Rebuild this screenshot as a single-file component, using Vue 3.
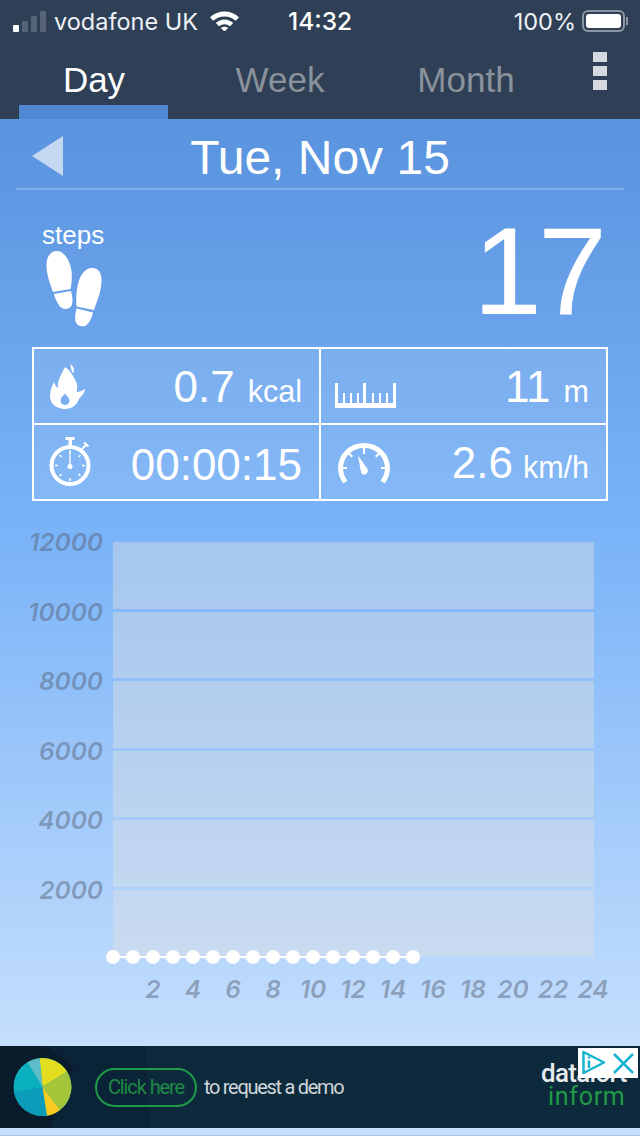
<template>
  <div class="page">
    <!-- Status bar + tabs -->
    <header class="top">
      <div class="status">
        <div class="status-left">
          <div class="signal">
            <i class="on"></i><i class="b2"></i><i class="b3"></i><i class="b4"></i>
          </div>
          <span class="carrier">vodafone UK</span>
          <svg class="wifi" width="29" height="20" viewBox="0 0 29 20">
            <path d="M0 6.300C8-1.600 21-1.600 29 6.300L25.800 9.800C19.500 4 9.500 4 3.200 9.800Z" fill="#fff" />
            <path d="M5.800 12C11 7.300 18 7.300 23.200 12L20 15.300C16.800 12.500 12.200 12.500 9 15.300Z" fill="#fff" />
            <path d="M10.800 17C13 15.200 16 15.200 18.200 17L14.500 20.500Z" fill="#fff" />
          </svg>
        </div>
        <span class="clock">14:32</span>
        <div class="status-right">
          <span class="pct">100%</span>
          <div class="battery"><div class="charge"></div></div>
          <div class="nub"></div>
        </div>
      </div>
      <nav class="tabs">
        <div v-for="t in tabs" :key="t" class="tab" :class="{ active: t === 'Day' }">{{ t }}</div>
        <div class="menu"><i></i><i></i><i></i></div>
      </nav>
    </header>

    <main class="content">
      <div class="date-row">
        <div class="back"></div>
        <h1>Tue, Nov 15</h1>
      </div>

      <section class="steps">
        <div class="steps-left">
          <div class="steps-label">steps</div>
          <svg width="58" height="76" viewBox="0 0 58 76">
            <g fill="#fff">
              <path d="M11 0C18 0 24 9 25.500 20C26.300 27 25.500 33 24.500 38L7 41C4 33 .5 24 .5 14C.5 5 5 0 11 0Z" />
              <path d="M7.800 43L25 40C26.500 46 27.500 52 25 55.500C22 59.500 15 58.500 12.500 53.500C10.500 50 8.800 47 7.800 43Z" />
              <path d="M46 17C53 17 56 23 55.500 31C55 41 51 50 48 59L30.500 55.500C30 49 30 41 32 33C34 24 39 17 46 17Z" />
              <path d="M30.500 57.500L47 61.500C46 67 43 72 40 74.500C36 76.500 31 75 29.500 70.500C28.500 67 29.500 62 30.500 57.500Z" />
            </g>
          </svg>
        </div>
        <div class="steps-count">17</div>
      </section>

      <section class="stats">
        <div class="cell">
          <svg class="flame" width="38" height="46" viewBox="0 0 38 46">
            <path fill="#fff" d="M21.500 0C25 3 26 6 24 9.500C22.500 7 21.500 4 21.500 0Z" />
            <path fill="#fff" fill-rule="evenodd" d="M16 3C22 7 25 13 28 20C28.500 23 28 26 27.500 28C30 28 33 27 36 25C35 31 31 33 30 35C28 41 23 45 16 45C8 45 1 40 1 32C1 26 3 22 5 18C6 21 7 23 9 24C8 18 12 10 16 3ZM16 29.500C14 32 11.500 33.500 11.500 36.500C11.500 39 13.500 41 16 41C18.500 41 20.500 39 20.500 36.500C20.500 33.500 17.500 32 16 29.500Z" />
          </svg>
          <span class="val">0.7<small>kcal</small></span>
        </div>
        <div class="cell">
          <svg class="ruler" width="62" height="26" viewBox="0 0 62 26">
            <path fill="#fff" d="M0 0H3V20H58V0H61V25H0ZM8 10H10V20H8ZM15 10H17V20H15ZM22 10H24V20H22ZM28 0H31V20H28ZM37 10H39V20H37ZM44 10H46V20H44ZM51 10H53V20H51Z" />
          </svg>
          <span class="val">11<small>m</small></span>
        </div>
        <div class="cell">
          <svg width="44" height="50" viewBox="0 0 44 50">
            <g fill="none" stroke="#fff">
              <circle cx="21" cy="28.500" r="18.500" stroke-width="4" />
              <path d="M21 13V16M21 41V44M6 28.500H9M33 28.500H36M10.500 18L12.500 20M31.500 18L29.500 20M10.500 39L12.500 37M31.500 39L29.500 37" stroke-width="1.500" />
              <path d="M21 15V28" stroke-width="1.300" />
              <path d="M33 12L37 8M35 5.500L39.500 9.500" stroke-width="2" />
            </g>
            <g fill="#fff">
              <circle cx="21" cy="29.500" r="2.500" />
              <rect x="16.500" y="0" width="9" height="3" />
              <rect x="19.500" y="3" width="3.500" height="6" />
            </g>
          </svg>
          <span class="val">00:00:15</span>
        </div>
        <div class="cell">
          <svg class="gauge" width="52" height="42" viewBox="0 0 52 42">
            <path fill="none" stroke="#fff" stroke-width="5" d="M7.500 39C3.500 34 2.500 29 2.500 25C3 12 13 2.500 26 2.500C39 2.500 49 12 49.500 25C49.500 29 48.500 34 44.500 39" />
            <path fill="#fff" d="M25 5H27V11H25ZM9.500 10.500L11 9L15 13L13.500 14.500ZM42.500 10.500L41 9L37 13L38.500 14.500ZM3 24H9V26H3ZM43 24H49V26H43Z" />
            <path fill="#fff" d="M20 12.500L29.500 26C30.500 29 29 31 27 31.500C25 32 23.500 31 23 29Z" />
          </svg>
          <span class="val">2.6<small class="tight">km/h</small></span>
        </div>
      </section>

      <!-- Hourly chart -->
      <section class="chart">
        <div class="chart-body">
          <div class="y-axis">
            <span v-for="l in yLabels" :key="l">{{ l }}</span>
          </div>
          <div class="plot">
            <div v-for="n in 6" :key="n" class="band"></div>
            <svg class="series" width="320" height="16" viewBox="0 0 320 16">
              <path d="M8 8H308" stroke="#fff" stroke-width="2" />
              <circle v-for="i in 16" :key="i" :cx="8 + (i - 1) * 20" cy="8" r="7" fill="#fff" />
            </svg>
          </div>
        </div>
        <div class="x-axis">
          <span v-for="h in hours" :key="h">{{ h }}</span>
        </div>
      </section>
    </main>

    <!-- Ad banner -->
    <aside class="ad">
      <svg class="ad-shade" width="160" height="82" viewBox="0 0 160 82">
        <path d="M0 0H46L74 20L50 82H0Z" fill="#0a1b2b" />
        <path d="M46 0H145L150 82H50L74 20Z" fill="#0a2336" />
      </svg>
      <svg class="pie" width="60" height="60" viewBox="0 0 60 60">
        <circle cx="29.500" cy="30" r="29.500" fill="#0ab0bd" stroke="#0a1a22" stroke-width="1" />
        <path d="M29.500 30L1 35A29 29 0 0 0 34 58.700Z" fill="#0a9cb8" />
        <path d="M29.500 30L26.500 1.200A29 29 0 0 1 54 14.500Z" fill="#e3dd1f" />
        <path d="M29.500 30L54 14.500A29 29 0 0 1 47 53Z" fill="#a4c43a" />
        <path d="M29.500 30L47 53A29 29 0 0 1 34 58.700Z" fill="#f8cb1e" />
        <path d="M29.500 30L14.500 5.200A29 29 0 0 1 26.500 1.200Z" fill="#5dbcc6" />
      </svg>
      <div class="pill">Click here</div>
      <span class="ad-text">to request a demo</span>
      <div class="brand">
        <div class="brand-top">datalort</div>
        <div class="brand-sub">inform</div>
      </div>
      <div class="adchoice">
        <svg width="26" height="26" viewBox="0 0 26 26">
          <path d="M2.500 2L23 12.500L2.500 23Z" fill="none" stroke="#17b4cf" stroke-width="2.500" stroke-linejoin="round" />
          <path d="M8 10.500V18M8 6.500V8.500" stroke="#17b4cf" stroke-width="2.500" />
        </svg>
        <svg width="23" height="23" viewBox="0 0 23 23">
          <path d="M2 2L21 21M21 2L2 21" stroke="#17b4cf" stroke-width="2.500" fill="none" />
        </svg>
      </div>
    </aside>
    <div class="foot"></div>
  </div>
</template>

<script setup>
const tabs = ['Day', 'Week', 'Month'];
const yLabels = [12000, 10000, 8000, 6000, 4000, 2000];
const hours = [2, 4, 6, 8, 10, 12, 14, 16, 18, 20, 22, 24];
</script>

<style>
html,
body {
  margin: 0;
  background: #c5dffd;
}
</style>

<style scoped>
.page {
  width: 640px;
  height: 1136px;
  display: flex;
  flex-direction: column;
  overflow: hidden;
  font-family: "Liberation Sans", Arial, sans-serif;
  color: #fff;
}

/* Dark top area */
.top {
  height: 119px;
  background: #2f4056;
  display: flex;
  flex-direction: column;
  flex-shrink: 0;
}

.status {
  height: 42px;
  display: flex;
  align-items: center;
  font-family: Inter, "Liberation Sans", sans-serif;
  font-size: 23.500px;
}

.status-left {
  display: flex;
  align-items: center;
  padding-left: 13px;
}

.signal {
  display: flex;
  align-items: flex-end;
  gap: 3px;
  height: 21px;
}

.signal i {
  width: 6px;
  background: #566475;
  border-radius: 1px;
}

.signal .on {
  height: 7px;
  background: #fff;
}

.signal .b2 {
  height: 11px;
}

.signal .b3 {
  height: 16px;
}

.signal .b4 {
  height: 21px;
}

.carrier {
  margin-left: 8px;
  font-size: 23.500px;
  color: #eef1f5;
}

.wifi {
  margin-left: 12px;
}

.clock {
  margin-left: 49px;
  font-size: 24.500px;
  font-weight: 500;
}

.status-right {
  margin-left: auto;
  display: flex;
  align-items: center;
  padding-right: 12px;
}

.pct {
  margin-right: 6px;
  color: #eef1f5;
}

.battery {
  width: 43px;
  height: 22px;
  box-sizing: border-box;
  border: 2px solid #8b95a3;
  border-radius: 6px;
  padding: 2px;
}

.charge {
  height: 100%;
  width: 35px;
  background: #fff;
  border-radius: 3px;
}

.nub {
  width: 2px;
  height: 8px;
  margin-left: 1px;
  background: #8b95a3;
}

.tabs {
  flex: 1;
  display: flex;
  padding-left: 1px;
}

.tab {
  width: 186px;
  height: 77px;
  padding-top: 18px;
  box-sizing: border-box;
  text-align: center;
  font-size: 35px;
  line-height: 40px;
  color: #8a929c;
  position: relative;
}

.tab.active {
  color: #fff;
}

.tab.active::after {
  content: "";
  position: absolute;
  left: 18px;
  bottom: 0;
  width: 149px;
  height: 14px;
  background: #5088d4;
}

.menu {
  margin-left: auto;
  margin-right: 33px;
  padding-top: 10px;
  display: flex;
  flex-direction: column;
  gap: 4px;
}

.menu i {
  display: block;
  width: 14px;
  height: 10px;
  background: #d5d8de;
}

/* Main gradient area */
.content {
  flex: 1;
  display: flex;
  flex-direction: column;
  background: linear-gradient(#5a93de 0, #7ab3f8 415px, #c5dffd 100%);
}

.date-row {
  height: 69px;
  margin: 0 16px;
  border-bottom: 2px solid #7fb0ec;
  display: flex;
  align-items: center;
  justify-content: center;
  position: relative;
}

.date-row h1 {
  margin: 8px 0 0;
  font-size: 48px;
  font-weight: 400;
  line-height: 60px;
}

.back {
  position: absolute;
  left: 16px;
  top: 17px;
  width: 0;
  height: 0;
  border-style: solid;
  border-width: 20px 31px 20px 0;
  border-color: transparent #c5d8f2 transparent transparent;
}

.steps {
  height: 157px;
  display: flex;
  justify-content: space-between;
  padding: 0 37px 0 42px;
}

.steps-left {
  padding-top: 30px;
}

.steps-label {
  font-size: 26px;
  line-height: 30px;
}

.steps-left svg {
  display: block;
  margin: 1px 0 0 4px;
}

.steps-count {
  font-size: 124px;
  line-height: 126px;
  letter-spacing: -4px;
  margin-top: 18px;
}

.stats {
  margin-left: 32px;
  width: 576px;
  height: 154px;
  box-sizing: border-box;
  border: 2px solid #fff;
  display: grid;
  grid-template-columns: 287px 1fr;
  grid-template-rows: 76px 1fr;
  background: rgba(255, 255, 255, 0.1);
}

.cell {
  display: flex;
  align-items: center;
  justify-content: space-between;
  padding: 0 17px 0 15px;
}

.cell:nth-child(odd) {
  border-right: 2px solid #fff;
}

.cell:nth-child(-n + 2) {
  border-bottom: 2px solid #fff;
}

.flame {
  margin-top: 2px;
}

.ruler {
  margin: 20px 0 0 -1px;
}

.gauge {
  margin: 4px 0 0 2px;
}

.val {
  font-size: 44px;
  line-height: 50px;
  padding-top: 6px;
}

.val small {
  font-size: 30.500px;
  margin-left: 13px;
}

.val small.tight {
  margin-left: 10px;
}

/* Chart */
.chart {
  margin-top: 41px;
}

.chart-body {
  display: flex;
}

.y-axis {
  width: 103px;
  display: grid;
  grid-template-rows: repeat(6, 69.600px);
  text-align: right;
  margin-top: -15px;
}

.y-axis span,
.x-axis span {
  font-family: Inter, "Liberation Sans", sans-serif;
  font-style: italic;
  font-weight: 600;
  font-size: 24.500px;
  line-height: 30px;
  color: rgba(85, 95, 115, 0.48);
}

.plot {
  margin-left: 10px;
  width: 481px;
  height: 415px;
  position: relative;
  display: grid;
  grid-template-rows: repeat(5, 66.500px) 1fr;
  row-gap: 3px;
}

/* the gaps between bands let the page gradient show as grid lines */
.band {
  background: rgba(225, 225, 225, 0.42);
}

.series {
  position: absolute;
  left: -8px;
  bottom: -8px;
}

.x-axis {
  display: flex;
  margin: 17px 0 0 133px;
}

.x-axis span {
  width: 40px;
  flex-shrink: 0;
  text-align: center;
}

/* Ad */
.ad {
  height: 82px;
  flex-shrink: 0;
  background: #0c2a3c;
  position: relative;
  display: flex;
  align-items: center;
}

.ad-shade {
  position: absolute;
  left: 0;
  top: 0;
}

.pie {
  position: relative;
  margin-left: 13px;
}

.pill {
  position: relative;
  margin-left: 22px;
  width: 102px;
  height: 39px;
  box-sizing: border-box;
  border: 2.500px solid #1f9a48;
  border-radius: 20px;
  text-align: center;
  font: 20px/34px Roboto, sans-serif;
  letter-spacing: -1.100px;
  color: #1f8a45;
}

.ad-text {
  position: relative;
  margin-left: 7px;
  font: 20px Roboto, sans-serif;
  letter-spacing: -1.300px;
  color: #d0d6da;
}

.brand {
  position: absolute;
  left: 541px;
  top: 16px;
  font-family: Roboto, sans-serif;
  line-height: 23px;
}

.brand-top {
  font-size: 26px;
  font-weight: 500;
  letter-spacing: -0.700px;
  color: #e8ecee;
}

.brand-sub {
  font-size: 25px;
  margin-left: 7px;
  letter-spacing: 0.700px;
  color: #1f9a45;
}

.adchoice {
  position: absolute;
  left: 578px;
  top: 2px;
  width: 60px;
  height: 30px;
  background: #fff;
  display: flex;
  align-items: center;
  gap: 5px;
  padding-left: 3px;
  box-sizing: border-box;
}

.foot {
  height: 8px;
  flex-shrink: 0;
  background: #c5dffd;
  border-bottom: 1px solid #a9c6e6;
  box-sizing: border-box;
}
</style>
